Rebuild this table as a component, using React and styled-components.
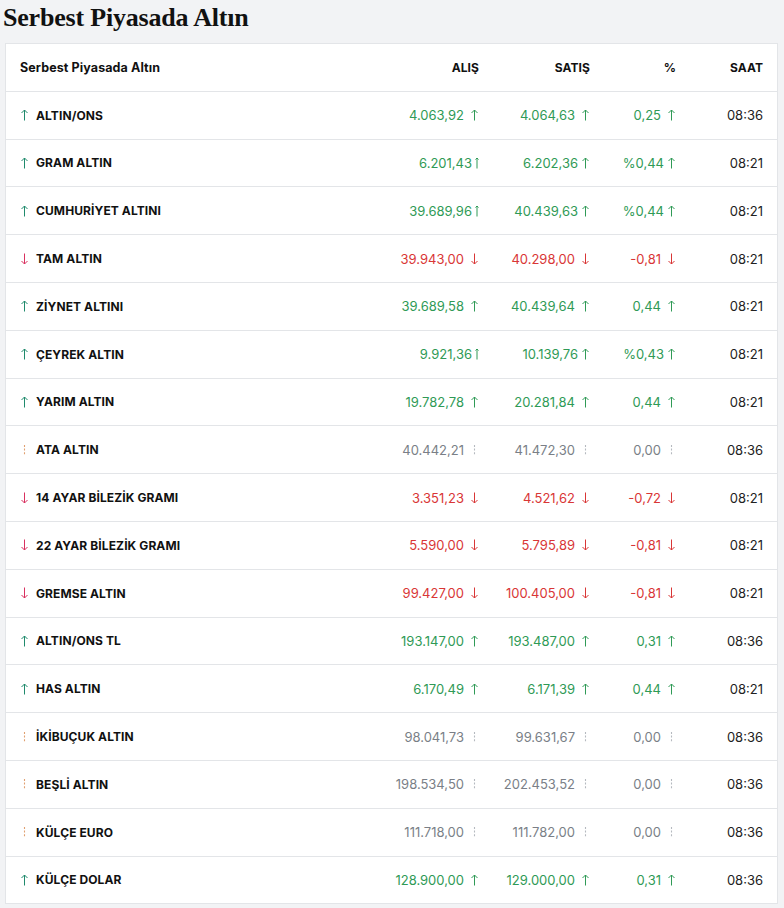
import React from 'react';
import styled, { createGlobalStyle } from 'styled-components';

const GlobalStyle = createGlobalStyle`
  body {
    margin: 0;
    background: #f2f3f5;
    font-family: Inter, "Noto Sans", sans-serif;
  }
`;

const COLORS = {
  up: '#2f9a56',
  down: '#d93636',
  flat: '#7a7f87',
};

const MARK_COLORS = {
  up: '#1f8a6c',
  down: '#d9305f',
  flat: '#e0a070',
};

const rows = [
  ['up', 'ALTIN/ONS', '4.063,92', '4.064,63', '0,25', '08:36'],
  ['up', 'GRAM ALTIN', '6.201,43', '6.202,36', '%0,44', '08:21', true],
  ['up', 'CUMHURİYET ALTINI', '39.689,96', '40.439,63', '%0,44', '08:21', true],
  ['down', 'TAM ALTIN', '39.943,00', '40.298,00', '-0,81', '08:21'],
  ['up', 'ZİYNET ALTINI', '39.689,58', '40.439,64', '0,44', '08:21'],
  ['up', 'ÇEYREK ALTIN', '9.921,36', '10.139,76', '%0,43', '08:21', true],
  ['up', 'YARIM ALTIN', '19.782,78', '20.281,84', '0,44', '08:21'],
  ['flat', 'ATA ALTIN', '40.442,21', '41.472,30', '0,00', '08:36'],
  ['down', '14 AYAR BİLEZİK GRAMI', '3.351,23', '4.521,62', '-0,72', '08:21'],
  ['down', '22 AYAR BİLEZİK GRAMI', '5.590,00', '5.795,89', '-0,81', '08:21'],
  ['down', 'GREMSE ALTIN', '99.427,00', '100.405,00', '-0,81', '08:21'],
  ['up', 'ALTIN/ONS TL', '193.147,00', '193.487,00', '0,31', '08:36'],
  ['up', 'HAS ALTIN', '6.170,49', '6.171,39', '0,44', '08:21'],
  ['flat', 'İKİBUÇUK ALTIN', '98.041,73', '99.631,67', '0,00', '08:36'],
  ['flat', 'BEŞLİ ALTIN', '198.534,50', '202.453,52', '0,00', '08:36'],
  ['flat', 'KÜLÇE EURO', '111.718,00', '111.782,00', '0,00', '08:36'],
  ['up', 'KÜLÇE DOLAR', '128.900,00', '129.000,00', '0,31', '08:36'],
];

const Page = styled.div`
  padding: 0 6px 0 5px;
`;

const Title = styled.h1`
  margin: 0 0 0 -2px;
  padding: 3px 0 0 0;
  height: 43px;
  box-sizing: border-box;
  font-family: "Liberation Serif", "DejaVu Serif", serif;
  font-weight: 700;
  font-size: 26px;
  line-height: 30px;
  color: #111;
  letter-spacing: -0.2px;
`;

const Card = styled.div`
  background: #fff;
  border: 1px solid #e3e5e8;
  border-bottom: 0;
`;

const Row = styled.div`
  display: grid;
  grid-template-columns: 1fr 111px 111px 86px 87px;
  align-items: center;
  height: 47.8px;
  box-sizing: border-box;
  padding: 0 14px;
  border-bottom: 1px solid #e3e5e8;
  font-size: 13px;
  color: #111;
`;

const HeadCell = styled.div`
  font-weight: 700;
  font-size: ${(p) => (p.left ? '12.5px' : '12px')};
  text-align: ${(p) => (p.left ? 'left' : 'right')};
  letter-spacing: 0.1px;
  color: #111;
`;

const Name = styled.div`
  display: flex;
  align-items: center;
  gap: 7px;
  font-weight: 700;
  font-size: 12px;
  letter-spacing: 0.1px;
`;

const Value = styled.div`
  display: flex;
  justify-content: flex-end;
  align-items: center;
  gap: ${(p) => (p.tight ? '3px' : '6px')};
  color: ${(p) => COLORS[p.dir]};
  font-size: 13px;
`;

const Time = styled.div`
  text-align: right;
  font-size: 13px;
  color: #222;
`;

function Mark({ dir, color, narrow }) {
  const w = narrow ? 4 : 9;
  const c = w / 2;
  if (dir === 'flat') {
    return (
      <svg width={9} height={12} viewBox="0 0 9 12">
        <line x1={4.5} y1={1} x2={4.5} y2={11} stroke={color} strokeWidth={1.1} strokeDasharray="2 1.6" />
      </svg>
    );
  }
  const head = narrow ? 1.5 : 3;
  return (
    <svg width={w} height={12} viewBox={`0 0 ${w} 12`}>
      {dir === 'up' ? (
        <>
          <line x1={c} y1={1} x2={c} y2={11.5} stroke={color} strokeWidth={1} />
          <polyline points={`${c - head},${1 + head} ${c},1 ${c + head},${1 + head}`} fill="none" stroke={color} strokeWidth={1} />
        </>
      ) : (
        <>
          <line x1={c} y1={0.5} x2={c} y2={11} stroke={color} strokeWidth={1} />
          <polyline points={`${c - head},${11 - head} ${c},11 ${c + head},${11 - head}`} fill="none" stroke={color} strokeWidth={1} />
        </>
      )}
    </svg>
  );
}

export default function App() {
  return (
    <Page>
      <GlobalStyle />
      <Title>Serbest Piyasada Altın</Title>
      <Card>
        <Row>
          <HeadCell left>Serbest Piyasada Altın</HeadCell>
          <HeadCell>ALIŞ</HeadCell>
          <HeadCell>SATIŞ</HeadCell>
          <HeadCell>%</HeadCell>
          <HeadCell>SAAT</HeadCell>
        </Row>
        {rows.map(([dir, name, buy, sell, pct, time, tight]) => (
          <Row key={name}>
            <Name>
              <Mark dir={dir} color={MARK_COLORS[dir]} />
              {name}
            </Name>
            <Value dir={dir} tight={tight}>
              {buy}
              <Mark dir={dir} color={dir === 'flat' ? '#b5b9bf' : COLORS[dir]} narrow={tight} />
            </Value>
            <Value dir={dir} tight={tight}>
              {sell}
              <Mark dir={dir} color={dir === 'flat' ? '#b5b9bf' : COLORS[dir]} />
            </Value>
            <Value dir={dir} tight={tight}>
              {pct}
              <Mark dir={dir} color={dir === 'flat' ? '#b5b9bf' : COLORS[dir]} />
            </Value>
            <Time>{time}</Time>
          </Row>
        ))}
      </Card>
    </Page>
  );
}
